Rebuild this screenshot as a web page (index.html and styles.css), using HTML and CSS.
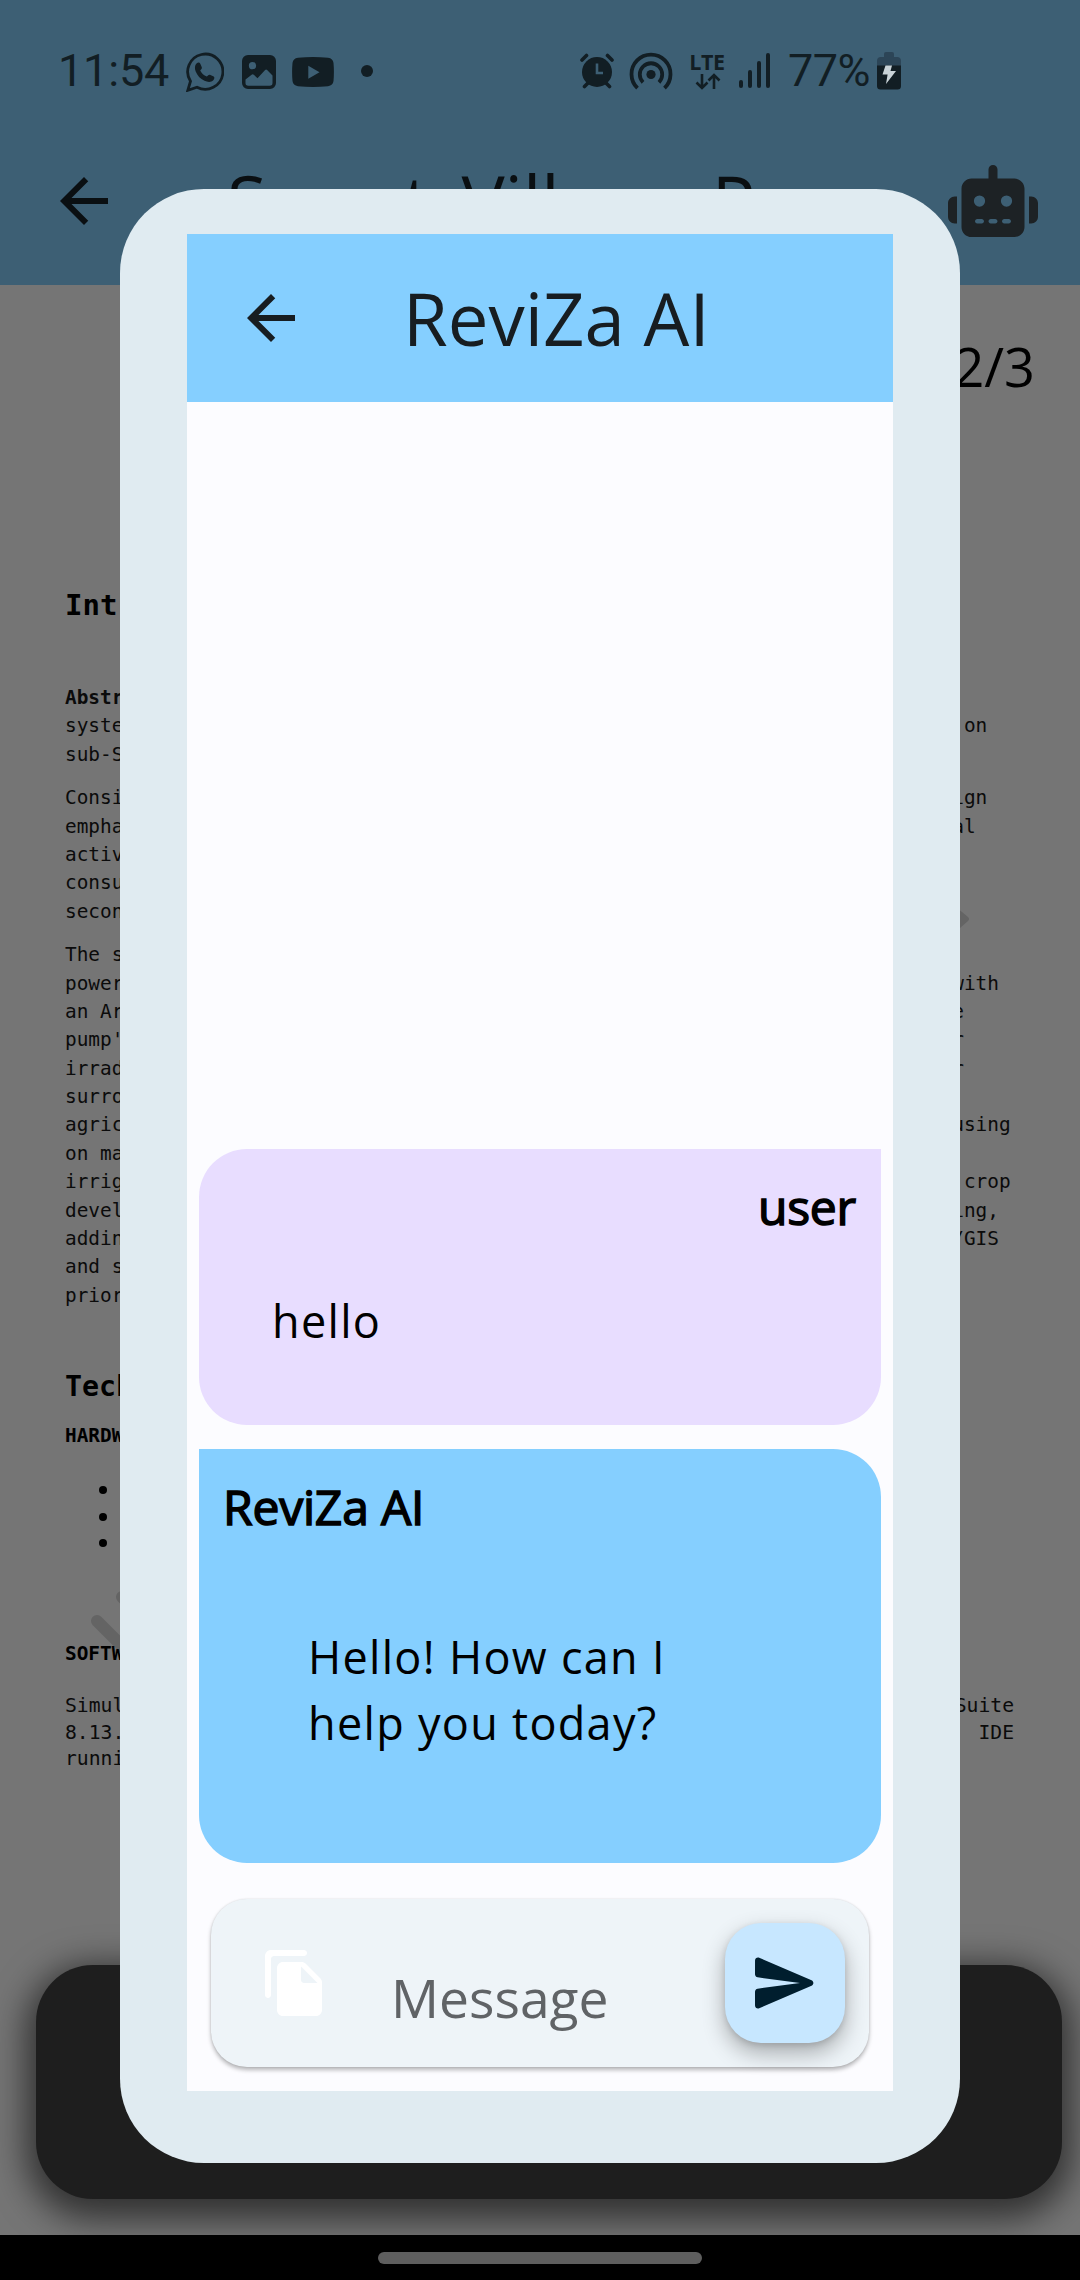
FILE: index.html
```html
<!DOCTYPE html>
<html lang="en">
<head>
<meta charset="utf-8">
<title>ReviZa AI</title>
<link rel="stylesheet" href="styles.css">
</head>
<body>
<div class="screen">
  <header class="top">
    <div class="status">
      <span class="time">11:54</span>
      <svg class="s-wa" viewBox="0 0 38 40" width="38" height="40"><path d="M1.800 38.300L4.500 29.200A17.600 17.600 0 1 1 11 35.200z" fill="none" stroke="#121e24" stroke-width="2.800"/><path d="M10.500 11.500c1.500-1.500 3-1.500 3.800.2l1.500 3.500c.5 1.300-.8 2.300-1.600 3.300 1.500 3 3.600 4.800 6.600 6 1.300-1.200 2.200-2.300 3.600-1.600l3.300 1.700c1.200.8.6 2.500-.4 3.600-2.200 2.300-5.600 2-8.800.6-4.300-1.900-7.200-5.200-8.800-9.200-1.200-3-1-6.300.8-8.100z" fill="#121e24"/></svg>
      <svg class="s-img" viewBox="0 0 34 34" width="34" height="34"><path fill="#121e24" fill-rule="evenodd" d="M6 0h22a6 6 0 0 1 6 6v22a6 6 0 0 1-6 6H6a6 6 0 0 1-6-6V6a6 6 0 0 1 6-6zM10.500 7a3.600 3.600 0 1 0 0 7.300 3.600 3.600 0 0 0 0-7.300zM3.500 24.500v3.500q0 2.800 2.800 2.800h21.400q2.800 0 2.800-2.800v-7.500l-5.400-5.500q-1-.8-2 0l-7.600 8.200-3.700-3.500q-1.200-.8-2.200 0z"/></svg>
      <svg class="s-yt" viewBox="0 0 42 30" width="42" height="30"><path fill="#121e24" fill-rule="evenodd" d="M6 .8Q21-.8 36 .8q5 .7 5.500 5.200.8 9 0 18-.5 4.500-5.500 5.200-15 1.600-30 0Q1 28.500.5 24q-.8-9 0-18Q1 1.500 6 .8zM16.300 8.800v13L27.500 15.300z"/></svg>
      <span class="dot"></span>
      <svg class="s-alarm" viewBox="0 0 34 36" width="34" height="36"><g stroke="#121e24" stroke-width="3.600" stroke-linecap="round"><path d="M2 7l4.500-4.500M32 7l-4.500-4.500M4.500 33.500l4-4M29.500 33.500l-4-4"/></g><circle cx="17" cy="19" r="15" fill="#121e24"/><path d="M17 10.500V20h6" fill="none" stroke="#3d5f74" stroke-width="2.600"/></svg>
      <svg class="s-cast" viewBox="0 0 44 38" width="44" height="38"><g fill="none" stroke="#121e24" stroke-width="3.800"><path d="M8.500 36.200A19.500 19.500 0 1 1 35.500 36.200"/><path d="M14 30.300A11.200 11.200 0 1 1 30 30.300"/></g><circle cx="22" cy="22.500" r="4.600" fill="#121e24"/></svg>
      <span class="lte"><b>LTE</b><svg viewBox="0 0 26 17" width="26" height="17"><path d="M7 1v14M1.500 9.500L7 15l5.500-5.500M19 16V2M13.500 7.500L19 2l5.500 5.500" fill="none" stroke="#121e24" stroke-width="2.600"/></svg></span>
      <svg class="s-sig" viewBox="0 0 32 36" width="32" height="36"><path d="M2 29v4M11 19v14M20 10v23M29 2v31" stroke="#121e24" stroke-width="4" stroke-linecap="round"/></svg>
      <span class="pct">77%</span>
      <svg class="s-bat" viewBox="0 0 24 38" width="24" height="38"><path fill="#2c4557" d="M7 2q0-2 2-2h6q2 0 2 2v3h3q4 0 4 4v5H0V9q0-4 4-4h3z"/><path fill="#121e24" d="M0 13.500h24V34q0 3.500-3.500 3.500h-17Q0 37.500 0 34z"/><path fill="#c9d3d8" d="M8.500 13.500h6.500l-1.500 5.500H19l-10 13 1.600-9.500H5.500z"/></svg>
    </div>
    <div class="bar">
      <svg class="back" viewBox="0 0 24 24" width="72" height="72"><path fill="#0a0f12" d="M20 11H7.830l5.590-5.590L12 4l-8 8 8 8 1.410-1.410L7.830 13H20v-2z"/></svg>
      <span class="page-title">Smart_Village_P</span>
      <svg class="robot" viewBox="0 0 640 512" width="90" height="72"><path fill="#1d2225" d="M320 0c17.700 0 32 14.300 32 32V96H472c39.800 0 72 32.200 72 72V440c0 39.800-32.200 72-72 72H168c-39.800 0-72-32.200-72-72V168c0-39.800 32.200-72 72-72H288V32c0-17.700 14.300-32 32-32zM208 384c-8.800 0-16 7.200-16 16s7.200 16 16 16h32c8.800 0 16-7.200 16-16s-7.200-16-16-16H208zm96 0c-8.800 0-16 7.200-16 16s7.200 16 16 16h32c8.800 0 16-7.200 16-16s-7.200-16-16-16H304zm96 0c-8.800 0-16 7.200-16 16s7.200 16 16 16h32c8.800 0 16-7.200 16-16s-7.200-16-16-16H400zM264 256a40 40 0 1 0-80 0 40 40 0 1 0 80 0zm152 40a40 40 0 1 0 0-80 40 40 0 1 0 0 80zM48 224H64V416H48c-26.500 0-48-21.500-48-48V272c0-26.500 21.500-48 48-48zm544 0c26.500 0 48 21.500 48 48v96c0 26.500-21.500 48-48 48H576V224h16z"/></svg>
    </div>
  </header>

  <main class="page">
    <div class="counter">2/3</div>
    <svg class="watermark" viewBox="0 0 1080 800" width="1080" height="800"><g stroke="#646464" stroke-width="12" stroke-linecap="round"><path d="M97 739l50 50M122 715l40 40"/></g><path fill="#646464" d="M940 28q12-8 22 2l6 5q2 2 0 4l-8 7-20 14z"/></svg>
    <article class="doc">
      <h2>Int</h2>
      <section>
        <p><b>Abstr</b></p>
        <p class="c79"><span>syste</span><span>on</span></p>
        <p>sub-S</p>
      </section>
      <section>
        <p class="c79"><span>Consi</span><span>ign</span></p>
        <p class="c78"><span>empha</span><span>al</span></p>
        <p>activ</p>
        <p>consu</p>
        <p>secon</p>
      </section>
      <section>
        <p>The s</p>
        <p class="c80"><span>power</span><span>with</span></p>
        <p class="c77"><span>an Ar</span><span>e</span></p>
        <p class="c77"><span>pump'</span><span>r</span></p>
        <p class="c77"><span>irrad</span><span>r</span></p>
        <p>surro</p>
        <p class="c81"><span>agric</span><span>using</span></p>
        <p>on ma</p>
        <p class="c81"><span>irrig</span><span>crop</span></p>
        <p class="c80"><span>devel</span><span>ing,</span></p>
        <p class="c80"><span>addin</span><span>/GIS</span></p>
        <p>and s</p>
        <p>prior</p>
      </section>
      <h2 class="tech">Tech</h2>
      <h3>HARDW</h3>
      <ul><li></li><li></li><li></li></ul>
      <h3 class="soft">SOFTW</h3>
      <section class="sim">
        <p><span>Simul</span><span>Suite</span></p>
        <p><span>8.13.</span><span class="loose">o IDE</span></p>
        <p>runni</p>
      </section>
    </article>
    <div class="sheet"></div>
  </main>
  <footer class="nav"><span class="pill"></span></footer>

  <div class="dialog">
    <div class="chat">
      <div class="chat-bar">
        <svg viewBox="0 0 24 24" width="72" height="72"><path fill="#171d21" d="M20 11H7.830l5.590-5.590L12 4l-8 8 8 8 1.410-1.410L7.830 13H20v-2z"/></svg>
        <h1>ReviZa AI</h1>
      </div>
      <div class="messages">
        <div class="msg user"><div class="who">user</div><div class="text">hello</div></div>
        <div class="msg ai"><div class="who">ReviZa AI</div><div class="text">Hello! How can I<br>help you today?</div></div>
      </div>
      <div class="composer">
        <svg class="attach" viewBox="0 0 24 24" width="72" height="72"><path fill="#fff" d="M15 1H4c-1.100 0-2 .9-2 2v13c0 .55.450 1 1 1s1-.45 1-1V4c0-.55.450-1 1-1h10c.55 0 1-.45 1-1s-.45-1-1-1zm.59 4.590l4.830 4.830c.37.370.580.880.580 1.410V21c0 1.100-.9 2-2 2H7.990C6.890 23 6 22.100 6 21l.01-14c0-1.100.890-2 1.990-2h6.170c.53 0 1.040.210 1.420.590zM15 12h4.500L14 6.500V11c0 .55.450 1 1 1z"/></svg>
        <span class="placeholder">Message</span>
        <div class="send"><svg viewBox="0 0 24 24" width="72" height="72"><path fill="#001e2e" d="M3.400 20.400l17.450-7.480c.81-.35.810-1.490 0-1.840L3.400 3.600c-.66-.29-1.390.2-1.390.910L2 9.120c0 .5.370.930.870.990L17 12 2.870 13.880c-.5.070-.87.500-.87 1l.01 4.610c0 .71.730 1.200 1.390.910z"/></svg></div>
      </div>
    </div>
  </div>
</div>
</body>
</html>
```
FILE: styles.css
```css
* { box-sizing: border-box; margin: 0; padding: 0; }
body { font-family: "Open Sans", sans-serif; background: #757575; }
svg { display: block; flex: none; }
.screen { position: relative; width: 1080px; height: 2280px; overflow: hidden; display: flex; flex-direction: column; }

/* app bar */
.top { height: 285px; background: #3d5f74; }
.status { height: 141px; padding-left: 58px; display: flex; align-items: center; color: #121e24; font-family: Roboto, sans-serif; }
.time, .pct { font-size: 45px; line-height: 53px; white-space: nowrap; }
.time { width: 128px; letter-spacing: -0.2px; }
.pct { width: 84px; margin-left: 17px; letter-spacing: -0.6px; }
.s-wa { margin-top: 2px; }
.s-img { margin-left: 18px; margin-top: 2px; }
.s-yt { margin-left: 16px; margin-top: 2px; }
.dot { width: 12px; height: 12px; border-radius: 50%; background: #121e24; margin-left: 27px; }
.s-alarm { margin-left: 207px; }
.s-cast { margin-left: 15px; }
.lte { margin-left: 15px; width: 38px; display: flex; flex-direction: column; align-items: center; font-family: "Open Sans", sans-serif; font-size: 21.500px; line-height: 17px; gap: 3px; padding-top: 2px; }
.lte b { font-weight: 700; letter-spacing: -0.3px; }
.lte svg { margin-left: 2px; }
.s-sig { margin-left: 13px; }
.s-bat { margin-left: 5px; margin-top: 1px; }
.bar { height: 120px; padding: 0 42px 0 48px; display: flex; align-items: center; }
.page-title { flex: 1; padding-left: 107px; font-size: 72.500px; line-height: 98px; color: #0a0f12; white-space: nowrap; }

/* document page */
.page { position: relative; flex: 1; background: #757575; overflow: hidden; display: flex; flex-direction: column; }
.counter { padding: 44px 45px 0 0; text-align: right; font-size: 54px; line-height: 74px; color: #000; }
.watermark { position: absolute; left: 0; top: 597px; }
.doc { position: relative; padding: 181px 0 0 65px; font-family: "DejaVu Sans Mono", monospace; font-size: 19.400px; line-height: 28.400px; color: #0b0b0b; }
.doc h2 { font-size: 29px; line-height: 42px; color: #000; }
.doc h2 + section { margin-top: 58px; }
.doc section + section { margin-top: 15px; }
.doc p { display: flex; justify-content: space-between; height: 28.400px; }
.doc h3 { font-size: 19.400px; line-height: 28px; color: #000; }
.doc .tech { margin-top: 56px; font-size: 28.300px; }
.doc h3 { margin-top: 14px; }
.doc ul { list-style: none; padding: 36px 0 0 34px; display: grid; gap: 18.500px; }
.doc li { width: 8px; height: 8px; border-radius: 50%; background: #000; }
.doc .soft { margin-top: 93px; }
.doc .sim { margin-top: 24px; width: 949px; font-size: 19.700px; }
.doc .sim p { height: 26.500px; }
.loose { word-spacing: 6px; }
.c77 { width: 77ch; } .c78 { width: 78ch; } .c79 { width: 79ch; } .c80 { width: 80ch; } .c81 { width: 81ch; }
.sheet { position: absolute; left: 36px; top: 1680px; width: 1026px; height: 234px; border-radius: 57px; background: #1e1e1e; box-shadow: 0 10px 34px 10px rgba(0,0,0,.58); }

.nav { height: 45px; background: #000; display: flex; justify-content: center; padding-top: 17px; }
.pill { width: 324px; height: 12px; border-radius: 6px; background: #5e5e5e; }

/* chat dialog */
.dialog { position: absolute; left: 120px; top: 189px; width: 840px; height: 1974px; border-radius: 84px; background: #e0ebf1; padding: 45px 67px 72px; }
.chat { height: 1857px; background: #fcfcff; display: flex; flex-direction: column; }
.chat-bar { height: 168px; background: #85cfff; display: flex; align-items: center; padding-left: 48px; }
.chat-bar h1 { font-weight: 400; font-size: 72.500px; line-height: 98px; color: #171d21; padding-left: 96px; white-space: nowrap; }
.messages { flex: 1; display: flex; flex-direction: column; justify-content: flex-end; gap: 24px; padding: 0 12px 36px; }
.msg { color: #000; font-size: 48px; line-height: 66px; padding: 25px 24px 24px; }
.who { -webkit-text-stroke: 1.500px #000; letter-spacing: -0.2px; }
.user { height: 276px; background: #e8ddff; border-radius: 48px 0 48px 48px; }
.user .who { text-align: right; padding-right: 1px; }
.user .text { padding: 48px 0 0 49px; }
.ai { height: 414px; background: #85cfff; border-radius: 0 48px 48px 48px; }
.ai .text { padding: 84px 0 0 85px; }
.text { font-size: 45px; letter-spacing: 1.300px; }
.composer { height: 168px; margin: 0 24px 24px; border-radius: 36px; background: #eef4f8; box-shadow: 0 3px 4px rgba(0,0,0,.28), 0 0 2px rgba(0,0,0,.12); display: flex; align-items: center; padding: 0 24px 0 48px; }
.placeholder { flex: 1; padding: 29px 0 0 60px; font-size: 53.400px; line-height: 74px; color: #606366; }
.send { width: 120px; height: 120px; border-radius: 36px; background: #c7e7ff; display: flex; align-items: center; justify-content: center; box-shadow: 0 10px 22px rgba(0,0,0,.3), 0 2px 6px rgba(0,0,0,.12); }
```
